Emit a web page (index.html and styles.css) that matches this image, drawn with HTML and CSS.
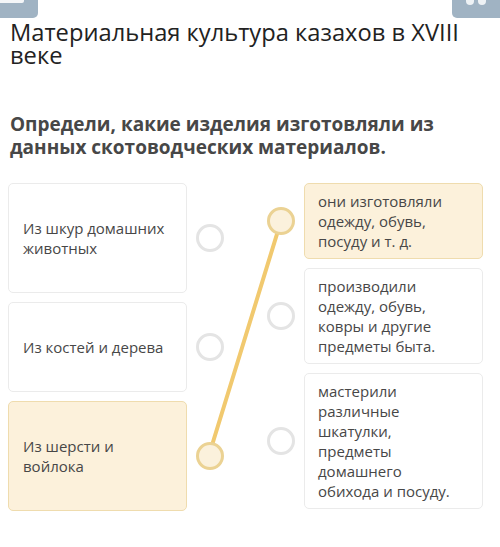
FILE: index.html
```html
<!DOCTYPE html>
<html lang="ru">
<head>
<meta charset="utf-8">
<title>Материальная культура казахов в XVIII веке</title>
<link rel="stylesheet" href="styles.css">
</head>
<body>
<div class="topbar">
  <div class="btn btn-left"><span class="btn-left-inner"></span></div>
  <div class="btn btn-right"><span class="dot"></span><span class="dot"></span></div>
</div>
<h1 class="title">Материальная культура казахов в XVIII веке</h1>
<h2 class="question">Определи, какие изделия изготовляли из данных скотоводческих материалов.</h2>
<div class="match">
  <svg class="link" width="500" height="340" aria-hidden="true">
    <line x1="281" y1="38" x2="209" y2="272" stroke="#f1c96f" stroke-width="4" stroke-linecap="round"/>
  </svg>
  <div class="col col-left">
    <div class="row">
      <div class="card card-l">Из шкур домашних животных</div>
      <span class="dotc"></span>
    </div>
    <div class="row">
      <div class="card card-l">Из костей и дерева</div>
      <span class="dotc"></span>
    </div>
    <div class="row">
      <div class="card card-l sel">Из шерсти и войлока</div>
      <span class="dotc sel"></span>
    </div>
  </div>
  <div class="col col-right">
    <div class="row">
      <span class="dotc sel"></span>
      <div class="card card-r sel">они изготовляли одежду, обувь, посуду и т. д.</div>
    </div>
    <div class="row">
      <span class="dotc"></span>
      <div class="card card-r">производили одежду, обувь, ковры и другие предметы быта.</div>
    </div>
    <div class="row">
      <span class="dotc"></span>
      <div class="card card-r">мастерили различные шкатулки, предметы домашнего обихода и посуду.</div>
    </div>
  </div>
</div>
</body>
</html>
```

FILE: styles.css
```css
html, body {
  margin: 0;
  padding: 0;
  background: #ffffff;
}
body {
  font-family: "Open Sans", "Noto Sans", "DejaVu Sans", sans-serif;
  width: 500px;
  height: 547px;
  overflow: hidden;
}
.topbar {
  display: flex;
  justify-content: space-between;
  height: 18px;
}
.btn {
  height: 18px;
  background: #a0b3c3;
  position: relative;
}
.btn-left {
  width: 38px;
  border-radius: 0 0 5px 0;
}
.btn-left-inner {
  position: absolute;
  left: 0;
  top: 0;
  width: 24px;
  height: 3px;
  background: #f4f6f8;
  border-radius: 0 0 2px 0;
}
.btn-right {
  width: 48px;
  border-radius: 0 0 0 5px;
  display: flex;
  justify-content: center;
  gap: 4px;
}
.dot {
  width: 8px;
  height: 5px;
  border-radius: 0 0 4px 4px;
  background: #eef2f5;
}
.title {
  margin: 3px 0 0;
  padding: 0 10px;
  font-size: 23.7px;
  line-height: 23px;
  font-weight: 400;
  color: #222222;
}
.question {
  margin: 46px 0 0;
  padding: 0 10px;
  font-size: 19px;
  line-height: 23px;
  font-weight: 700;
  color: #474747;
}
.match {
  position: relative;
  display: flex;
  gap: 43px;
  padding: 0 8px;
  margin-top: 24px;
}
.link {
  position: absolute;
  left: 0;
  top: 0;
}
.col {
  display: flex;
  flex-direction: column;
  gap: 9px;
  width: 216px;
}
.row {
  display: flex;
  align-items: center;
  gap: 9px;
}
.card {
  box-sizing: border-box;
  width: 179px;
  flex: none;
  background: #ffffff;
  border: 1px solid #ebebeb;
  border-radius: 5px;
  font-size: 15px;
  line-height: 20px;
  color: #474747;
}
.card-l {
  padding: 34px 14px 34px 14px;
}
.card-r {
  padding: 7px 20px 7px 13px;
}
.card.sel {
  background: #fcf1db;
  border-color: #efdcae;
}
.dotc {
  position: relative;
  z-index: 1;
  box-sizing: border-box;
  width: 28px;
  height: 28px;
  flex: none;
  border-radius: 50%;
  border: 3px solid #e4e4e4;
  background: #ffffff;
}
.dotc.sel {
  border-color: #ebd293;
  background: #fbf1dc;
}
```
